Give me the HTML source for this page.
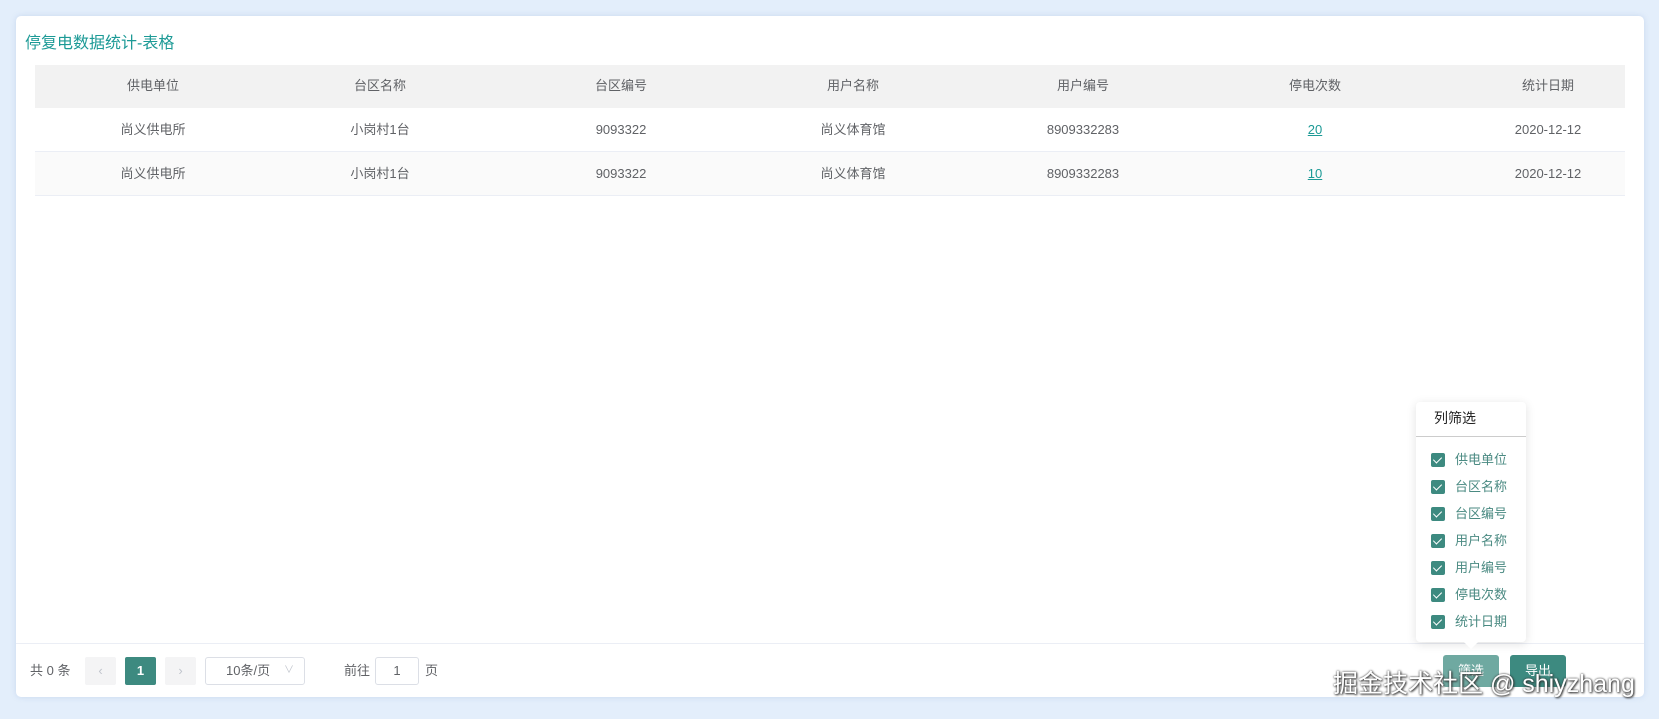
<!DOCTYPE html>
<html><head><meta charset="utf-8"><style>
*{margin:0;padding:0;box-sizing:border-box}
body{width:1659px;height:719px;background:#e3eefb;font-family:"Liberation Sans","Noto Sans CJK SC",sans-serif;position:relative;overflow:hidden;color:#606266}
.card{position:absolute;left:16px;top:16px;width:1628px;height:681px;background:#fff;border-radius:5px;box-shadow:0 0 6px rgba(120,150,200,.25)}
.title{position:absolute;left:25px;top:29px;font-size:16px;color:#1c9a96}
.a{position:absolute;font-size:13px;line-height:20px;height:20px;transform:translateX(-50%);white-space:nowrap}
.hdr{position:absolute;left:35px;top:65px;width:1590px;height:43px;background:#f2f2f2}
.r1{position:absolute;left:35px;top:108px;width:1590px;height:44px;background:#fff;border-bottom:1px solid #ebeef5}
.r2{position:absolute;left:35px;top:152px;width:1590px;height:44px;background:#fafafa;border-bottom:1px solid #ebeef5}
.lnk{color:#1c9a96;text-decoration:underline}
.foot{position:absolute;left:16px;top:643px;width:1628px;border-top:1px solid #ebeef5}
.pbtn{position:absolute;top:657px;width:31px;height:28px;background:#f4f4f5;border-radius:2px;color:#c0c4cc;font-size:13px;text-align:center;line-height:28px}
.box{position:absolute;top:657px;height:28px;border:1px solid #dcdfe6;border-radius:3px;background:#fff;font-size:13px;text-align:center;line-height:26px}
.t{position:absolute;top:661px;font-size:13px;line-height:20px}
.pop{position:absolute;left:1416px;top:402px;width:110px;height:240px;background:#fff;border-radius:4px;box-shadow:0 2px 10px rgba(0,0,0,.12)}
.it{position:absolute;left:15px;font-size:13px;color:#4a8a82;line-height:14px}
.it i{display:inline-block;width:14px;height:14px;background:#3d8a80;border-radius:2px;vertical-align:top;margin-right:10px;position:relative}
.it i:after{content:"";position:absolute;left:4px;top:2px;width:4px;height:7px;border:solid #fff;border-width:0 1.5px 1.5px 0;transform:rotate(45deg)}
.btn{position:absolute;top:655px;width:56px;height:32px;border-radius:3px;color:#fff;font-size:13px;text-align:center;line-height:32px}
.wm{position:absolute;left:1333px;top:664px;font-size:25px;color:#fff;text-shadow:0 0 2px #333,1px 1px 2px #333;white-space:nowrap}
</style></head><body>
<div class="card"></div>
<div class="title">停复电数据统计-表格</div>
<div class="hdr"></div><div class="r1"></div><div class="r2"></div>
<div class="a" style="left:153px;top:76px">供电单位</div>
<div class="a" style="left:380px;top:76px">台区名称</div>
<div class="a" style="left:621px;top:76px">台区编号</div>
<div class="a" style="left:853px;top:76px">用户名称</div>
<div class="a" style="left:1083px;top:76px">用户编号</div>
<div class="a" style="left:1315px;top:76px">停电次数</div>
<div class="a" style="left:1548px;top:76px">统计日期</div>
<div class="a" style="left:153px;top:120px">尚义供电所</div>
<div class="a" style="left:380px;top:120px">小岗村1台</div>
<div class="a" style="left:621px;top:120px">9093322</div>
<div class="a" style="left:853px;top:120px">尚义体育馆</div>
<div class="a" style="left:1083px;top:120px">8909332283</div>
<div class="a lnk" style="left:1315px;top:120px">20</div>
<div class="a" style="left:1548px;top:120px">2020-12-12</div>
<div class="a" style="left:153px;top:164px">尚义供电所</div>
<div class="a" style="left:380px;top:164px">小岗村1台</div>
<div class="a" style="left:621px;top:164px">9093322</div>
<div class="a" style="left:853px;top:164px">尚义体育馆</div>
<div class="a" style="left:1083px;top:164px">8909332283</div>
<div class="a lnk" style="left:1315px;top:164px">10</div>
<div class="a" style="left:1548px;top:164px">2020-12-12</div>
<div class="foot"></div>
<div class="t" style="left:30px">共 0 条</div>
<div class="pbtn" style="left:85px">‹</div>
<div class="pbtn" style="left:125px;background:#3d8a80;color:#fff;font-weight:bold">1</div>
<div class="pbtn" style="left:165px">›</div>
<div class="box" style="left:205px;width:100px;text-align:left;padding-left:20px">10条/页<span style="position:absolute;right:10px;color:#c0c4cc;font-size:10px">∨</span></div>
<div class="t" style="left:344px">前往</div>
<div class="box" style="left:375px;width:44px">1</div>
<div class="t" style="left:425px">页</div>
<div class="pop">
<div style="position:absolute;left:18px;top:6px;font-size:14px;color:#222">列筛选</div>
<div style="position:absolute;left:0;top:34px;width:110px;border-top:1px solid #ccc"></div>
<div class="it" style="top:51px"><i></i>供电单位</div>
<div class="it" style="top:78px"><i></i>台区名称</div>
<div class="it" style="top:105px"><i></i>台区编号</div>
<div class="it" style="top:132px"><i></i>用户名称</div>
<div class="it" style="top:159px"><i></i>用户编号</div>
<div class="it" style="top:186px"><i></i>停电次数</div>
<div class="it" style="top:213px"><i></i>统计日期</div>
</div>
<div style="position:absolute;left:1466px;top:637px;width:10px;height:10px;background:#fff;transform:rotate(45deg)"></div>
<div class="btn" style="left:1443px;background:#6fa9a1">筛选</div>
<div class="btn" style="left:1510px;background:#3d8a80">导出</div>
<div class="wm">掘金技术社区 @ shiyzhang</div>
</body></html>
